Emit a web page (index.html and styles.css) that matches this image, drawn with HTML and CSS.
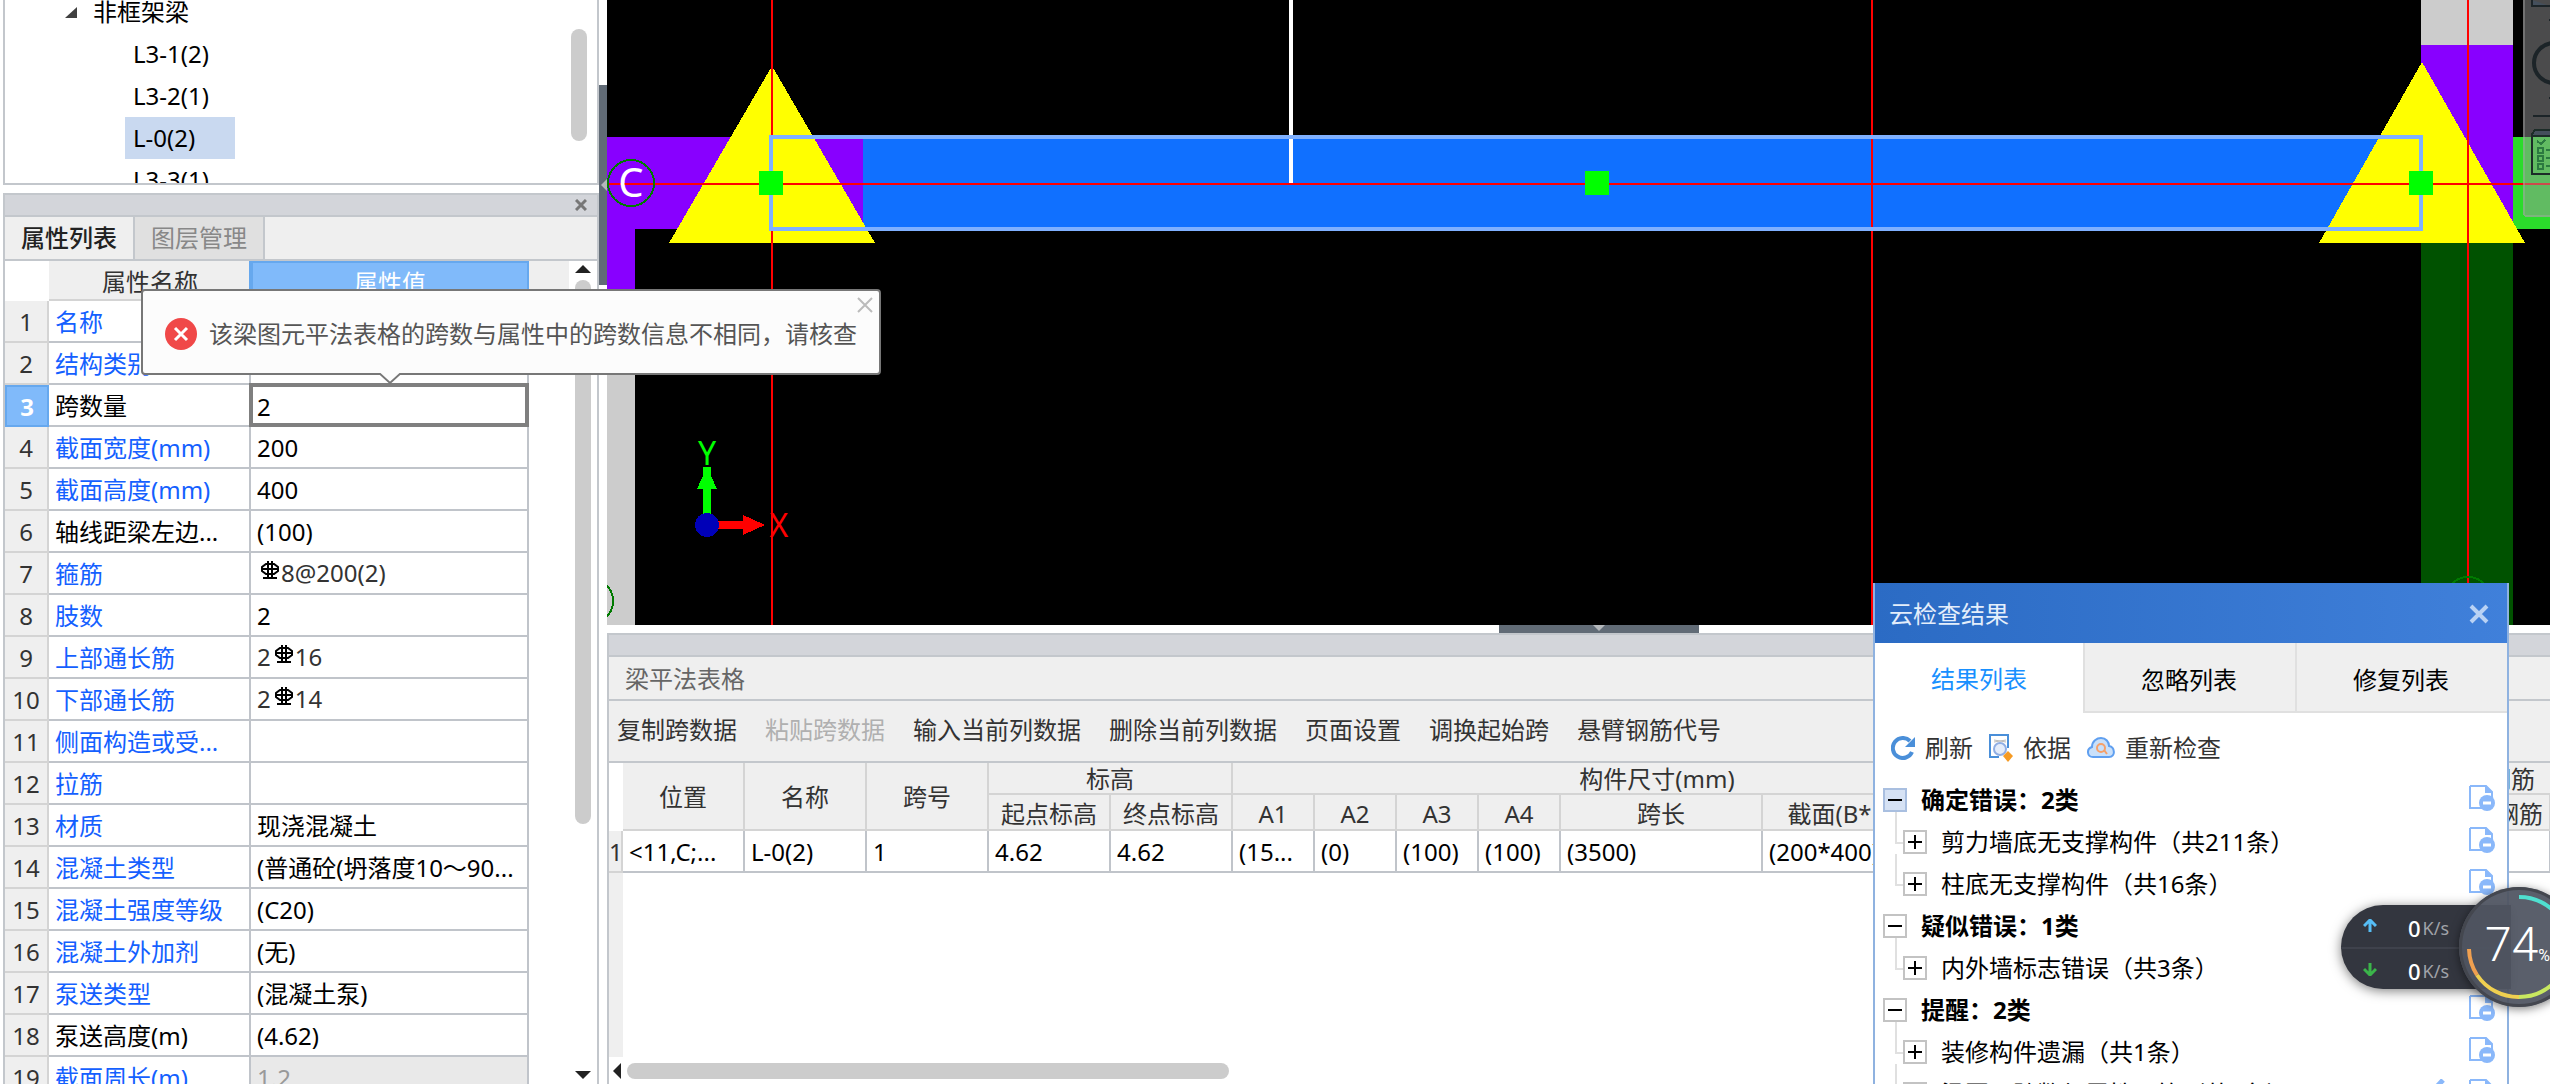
FILE: index.html
```html
<!DOCTYPE html>
<html lang="zh-CN">
<head>
<meta charset="utf-8">
<title>梁平法表格</title>
<link rel="stylesheet" href="styles.css">
</head>
<body>
<svg class="defs" width="0" height="0" aria-hidden="true">
  <defs>
    <symbol id="rebar" viewBox="0 0 18 18">
      <path d="M7 0V14M11 0V14M0 8H18M2 17H16M7 14V17M11 14V17M5 3H13L17 6V10L13 13H5L1 10V6Z" fill="none" stroke="#000" stroke-width="2"/>
    </symbol>
    <symbol id="doc" viewBox="0 0 26 26">
      <path d="M1 1H17L23 7V14M14 23H1V1" fill="none" stroke="#8ab8fa" stroke-width="2"/>
      <path d="M16 0L24 8H16Z" fill="#8ab8fa"/>
      <circle cx="18" cy="18" r="8" fill="#8ab8fa"/>
      <path d="M14 18H22" stroke="#fff" stroke-width="3"/>
    </symbol>
  </defs>
</svg>
<div class="app">
  <aside class="side">
    <section class="components">
      <ul class="comp-tree">
        <li class="comp-root"><svg width="12" height="11"><path d="M12 0V11H0Z" fill="#404040"/></svg><span>非框架梁</span></li>
        <li><span>L3-1(2)</span></li>
        <li><span>L3-2(1)</span></li>
        <li><span class="picked">L-0(2)</span></li>
        <li><span>L3-3(1)</span></li>
      </ul>
      <div class="comp-thumb"></div>
    </section>
    <section class="props">
      <div class="dock-bar"><button class="dock-close" aria-label="关闭"><svg width="12" height="12"><path d="M1 1L11 11M11 1L1 11" stroke="#777" stroke-width="3"/></svg></button></div>
      <div class="side-tabs"><button class="side-tab on">属性列表</button><button class="side-tab">图层管理</button></div>
      <div class="props-body">
        <table class="prop-table">
          <colgroup><col class="c-no"><col class="c-name"><col class="c-value"></colgroup>
          <thead><tr><td class="corner"></td><th>属性名称</th><th class="active">属性值</th></tr></thead>
          <tbody>
            <tr><th>1</th><td class="link">名称</td><td>L-0(2)</td></tr>
            <tr><th>2</th><td class="link">结构类别</td><td></td></tr>
            <tr><th class="active">3</th><td><label for="spans">跨数量</label></td><td class="editing"><input id="spans" value="2"></td></tr>
            <tr><th>4</th><td class="link">截面宽度(mm)</td><td>200</td></tr>
            <tr><th>5</th><td class="link">截面高度(mm)</td><td>400</td></tr>
            <tr><th>6</th><td>轴线距梁左边...</td><td>(100)</td></tr>
            <tr><th>7</th><td class="link">箍筋</td><td class="bar"><svg><use href="#rebar"/></svg>8@200(2)</td></tr>
            <tr><th>8</th><td class="link">肢数</td><td>2</td></tr>
            <tr><th>9</th><td class="link">上部通长筋</td><td class="bar">2<svg><use href="#rebar"/></svg>16</td></tr>
            <tr><th>10</th><td class="link">下部通长筋</td><td class="bar">2<svg><use href="#rebar"/></svg>14</td></tr>
            <tr><th>11</th><td class="link">侧面构造或受...</td><td></td></tr>
            <tr><th>12</th><td class="link">拉筋</td><td></td></tr>
            <tr><th>13</th><td class="link">材质</td><td>现浇混凝土</td></tr>
            <tr><th>14</th><td class="link">混凝土类型</td><td>(普通砼(坍落度10～90...</td></tr>
            <tr><th>15</th><td class="link">混凝土强度等级</td><td>(C20)</td></tr>
            <tr><th>16</th><td class="link">混凝土外加剂</td><td>(无)</td></tr>
            <tr><th>17</th><td class="link">泵送类型</td><td>(混凝土泵)</td></tr>
            <tr><th>18</th><td>泵送高度(m)</td><td>(4.62)</td></tr>
            <tr><th>19</th><td class="link">截面周长(m)</td><td class="off">1.2</td></tr>
          </tbody>
        </table>
        <div class="head-rest"></div>
        <div class="vbar">
          <svg width="16" height="8"><path d="M0 8L8 0L16 8Z" fill="#222"/></svg>
          <div class="vthumb"></div>
          <svg width="16" height="8"><path d="M0 0L8 8L16 0Z" fill="#222"/></svg>
        </div>
      </div>
    </section>
  </aside>
  <div class="vsplit"><div class="vgrip"><svg width="6" height="12"><path d="M6 0V12L0 6Z" fill="#b4b7bb"/></svg></div></div>
  <main class="main">
    <svg class="canvas" shape-rendering="crispEdges">
      <rect width="100%" height="100%" fill="#000"/>
      <rect x="0" y="229" width="28" height="100%" fill="#ccc"/>
      <rect x="0" y="137" width="256" height="92" fill="#8800ff"/>
      <rect x="0" y="229" width="28" height="90" fill="#8800ff"/>
      <rect x="256" y="137" width="1558" height="92" fill="#1070ff"/>
      <rect x="1814" y="0" width="92" height="45" fill="#ccc"/>
      <rect x="1814" y="45" width="92" height="184" fill="#8800ff"/>
      <rect x="1814" y="229" width="92" height="396" fill="#005200"/>
      <rect x="1906" y="137" width="60" height="92" fill="#2bdc2b"/>
      <path d="M684 0V183" stroke="#fff" stroke-width="4"/>
      <path d="M165 66L268 243H62Z M1815 62L1918 243H1712Z" fill="#ff0"/>
      <path d="M0 184H1943M165 0V625M1265 0V625M1861 0V625" stroke="#f00" stroke-width="2"/>
      <rect x="164" y="137" width="1650" height="92" fill="none" stroke="#7fb0ff" stroke-width="4"/>
      <path d="M152 171h24v24h-24zM978 171h24v24h-24zM1802 171h24v24h-24z" fill="#0f0"/>
      <g fill="none" stroke="#007a00" stroke-width="2"><circle cx="24" cy="183" r="23"/><circle cx="-17" cy="601" r="23"/><circle cx="1861" cy="600" r="23"/></g>
      <path d="M100 467V525" stroke="#0f0" stroke-width="8"/>
      <path d="M100 467L110 489H90Z" fill="#0f0"/>
      <path d="M100 525H138" stroke="#f00" stroke-width="8"/>
      <path d="M158 525L136 535V515Z" fill="#f00"/>
      <circle cx="100" cy="525" r="12" fill="#0000b8"/>
      <g text-anchor="middle" class="axis"><text x="24" y="197" font-size="40" fill="#fff">C</text><text x="100" y="465" font-size="32" fill="#0f0">Y</text><text x="172" y="537" font-size="32" fill="#f00">X</text></g>
      <rect x="1916" y="-4" width="80" height="221" rx="4" fill="#99999b" fill-opacity=".49"/>
      <path d="M1917 0V213q0 3 3 3H1943" fill="none" stroke="#aaa" stroke-opacity=".4" stroke-width="2"/>
      <g fill="none" stroke="#1c2428" stroke-width="2" shape-rendering="auto">
        <path d="M1925 0V6H1943" fill="#444f5c"/><path d="M1942 20H1943M1942 98H1943M1926 116H1943"/>
        <circle cx="1947" cy="63" r="20" stroke-width="4"/>
      </g>
      <path d="M1928 130H1943V136H1926Z" fill="#444f5c"/>
      <path d="M1943 130H1928L1925 134V174H1943M1925 136H1943" fill="none" stroke="#1c2c28" stroke-width="2"/>
      <path d="M1930 141L1934 144L1938 140M1931 148h5v5h-5zM1931 156h5v5h-5zM1931 164h5v5h-5zM1939 150H1943M1939 158H1943M1939 166H1943" fill="none" stroke="#2b7a40" stroke-width="2"/>
    </svg>
    <div class="hsplit"><div class="hgrip"><svg width="12" height="6"><path d="M0 0H12L6 6Z" fill="#b4b7bb"/></svg></div></div>
    <section class="beam">
      <div class="dock-bar"></div>
      <h2 class="beam-title">梁平法表格</h2>
      <div class="beam-tools">
        <button>复制跨数据</button><button disabled>粘贴跨数据</button><button>输入当前列数据</button><button>删除当前列数据</button><button>页面设置</button><button>调换起始跨</button><button>悬臂钢筋代号</button>
      </div>
      <div class="grid-wrap">
        <table class="beam-table">
          <colgroup><col class="w-no"><col class="w-m"><col class="w-m"><col class="w-m"><col class="w-m"><col class="w-m"><col class="w-s"><col class="w-s"><col class="w-s"><col class="w-s"><col class="w-l"><col class="w-x"><col class="w-x"><col class="w-m"><col class="w-y"><col class="w-z"><col class="w-v"></colgroup>
          <thead>
            <tr><td class="corner" rowspan="2"></td><th rowspan="2">位置</th><th rowspan="2">名称</th><th rowspan="2">跨号</th><th colspan="2">标高</th><th colspan="7">构件尺寸(mm)</th><th rowspan="2">上通长筋</th><th colspan="3">上部钢筋</th></tr>
            <tr><th>起点标高</th><th>终点标高</th><th>A1</th><th>A2</th><th>A3</th><th>A4</th><th>跨长</th><th>截面(B*H)</th><th>距左边线</th><th>左支座钢筋</th><th>跨中钢筋</th><th>右支座钢筋</th></tr>
          </thead>
          <tbody><tr><th>1</th><td>&lt;11,C;...</td><td>L-0(2)</td><td>1</td><td>4.62</td><td>4.62</td><td>(15...</td><td>(0)</td><td>(100)</td><td>(100)</td><td>(3500)</td><td>(200*400)</td><td></td><td></td><td></td><td></td><td></td></tr></tbody>
        </table>
        <div class="gutter"></div>
      </div>
      <div class="hbar"><svg width="8" height="16"><path d="M8 0V16L0 8Z" fill="#222"/></svg><div class="hthumb"></div></div>
    </section>
  </main>

  <div class="tip" role="alert">
    <svg width="32" height="32"><circle cx="16" cy="16" r="16" fill="#f04848"/><path d="M10 10L22 22M22 10L10 22" stroke="#fff" stroke-width="3"/></svg>
    <span>该梁图元平法表格的跨数与属性中的跨数信息不相同，请核查</span>
    <button class="tip-close" aria-label="关闭"><svg width="16" height="16"><path d="M1 1L15 15M15 1L1 15" stroke="#bbb" stroke-width="2"/></svg></button>
    <svg class="tip-tail" width="22" height="12"><path d="M0 0L11 10L22 0" fill="#fcfcfc" stroke="#777" stroke-width="2"/></svg>
  </div>

  <section class="cloud">
    <header class="cloud-head"><span>云检查结果</span><button aria-label="关闭"><svg width="20" height="20"><path d="M2 2L18 18M18 2L2 18" stroke="#b9d2f4" stroke-width="4"/></svg></button></header>
    <nav class="cloud-tabs"><button class="on">结果列表</button><button>忽略列表</button><button>修复列表</button></nav>
    <div class="cloud-tools">
      <button><svg width="24" height="24"><path d="M19 5A10 10 0 1 0 21 16" fill="none" stroke="#4a8fd9" stroke-width="4"/><path d="M24 1V11H14Z" fill="#4a8fd9"/></svg>刷新</button>
      <button><svg width="24" height="28"><path d="M19 14V1H1V23H10" fill="none" stroke="#4a8fd9" stroke-width="2"/><path d="M5 6L17 8M17 6L5 8" stroke="#bbb"/><circle cx="11" cy="15" r="6" fill="#e4ecfa" stroke="#90aee4" stroke-width="2"/><path d="M19 17L24 22L19 28L14 22Z" fill="#f59a23"/></svg>依据</button>
      <button><svg width="28" height="22"><path d="M6 20C0 20-1 12 5 10C5 4 10 1 14 1C19 1 22 5 22 9C28 10 29 20 22 20Z" fill="#c9e0fa" stroke="#5f9ff0" stroke-width="2"/><circle cx="14" cy="11" r="4" fill="none" stroke="#f5a06a" stroke-width="2"/><path d="M17 13L20 17" stroke="#f5a06a" stroke-width="2"/></svg>重新检查</button>
    </div>
    <ul class="checks">
      <li class="group"><button class="box hot" aria-label="收起"></button><span>确定错误：2类</span><svg><use href="#doc"/></svg></li>
      <li class="item"><button class="box plus" aria-label="展开"></button><span>剪力墙底无支撑构件（共211条）</span><svg><use href="#doc"/></svg></li>
      <li class="item"><button class="box plus" aria-label="展开"></button><span>柱底无支撑构件（共16条）</span><svg><use href="#doc"/></svg></li>
      <li class="group"><button class="box" aria-label="收起"></button><span>疑似错误：1类</span><svg><use href="#doc"/></svg></li>
      <li class="item"><button class="box plus" aria-label="展开"></button><span>内外墙标志错误（共3条）</span><svg><use href="#doc"/></svg></li>
      <li class="group"><button class="box" aria-label="收起"></button><span>提醒：2类</span><svg><use href="#doc"/></svg></li>
      <li class="item"><button class="box plus" aria-label="展开"></button><span>装修构件遗漏（共1条）</span><svg><use href="#doc"/></svg></li>
      <li class="item"><button class="box plus" aria-label="展开"></button><span>梁图元跨数与属性不符（共2条）</span><svg viewBox="0 0 26 26"><path d="M2 14L14 1" stroke="#8ab8fa" stroke-width="5"/></svg><svg><use href="#doc"/></svg></li>
    </ul>
  </section>

  <div class="meter">
    <div class="speeds">
      <div><svg width="14" height="14"><path d="M7 13V2M1 7L7 1L13 7" fill="none" stroke="#56bdf5" stroke-width="3"/></svg><b>0</b><i>K/s</i></div>
      <div><svg width="14" height="14"><path d="M7 1V12M1 7L7 13L13 7" fill="none" stroke="#3bb54a" stroke-width="3"/></svg><b>0</b><i>K/s</i></div>
    </div>
    <div class="dial">
      <svg width="120" height="120" viewBox="0 0 120 120"><path d="M60 10A50 50 0 0 1 110 60" fill="none" stroke="#4fe0d0" stroke-width="4"/><path d="M10 62A50 50 0 0 0 18 88" fill="none" stroke="#f0a050" stroke-width="4"/><path d="M18 88A50 50 0 0 0 60 110" fill="none" stroke="#f0d050" stroke-width="4"/><path d="M60 110A50 50 0 0 0 110 60" fill="none" stroke="#c8e860" stroke-width="4"/></svg>
      <span class="pct">74<small>%</small></span>
    </div>
  </div>
</div>
</body>
</html>
```
FILE: styles.css
```css
* { box-sizing: border-box; }
body {
  margin: 0;
  font: 24px/32px "Noto Sans", "Noto Sans CJK SC", sans-serif;
  color: #000;
  background: #fff;
}
button {
  font: inherit;
  color: inherit;
  background: none;
  border: 0;
  padding: 0;
  margin: 0;
}
ul { list-style: none; margin: 0; padding: 0; }
svg { display: block; flex: none; }
.defs { position: absolute; }
.app {
  position: relative;
  display: flex;
  height: 100vh;
  overflow: hidden;
}

/* left column */
.side { flex: none; width: 599px; padding-left: 3px; display: flex; flex-direction: column; }
.components {
  flex: none;
  height: 185px;
  overflow: hidden;
  display: flex;
  justify-content: space-between;
  border: solid #c3c7cc;
  border-width: 0 2px 2px;
}
.comp-tree { margin-top: -9px; }
.comp-tree li { height: 42px; padding-left: 120px; display: flex; align-items: center; }
.comp-tree span { width: 110px; padding-left: 8px; line-height: 42px; white-space: nowrap; }
.comp-tree .picked { background: #c9d9f0; }
.comp-tree .comp-root { padding-left: 60px; gap: 8px; }
.comp-thumb { width: 16px; height: 112px; margin: 29px 10px 0 0; border-radius: 8px; background: #ccc; }

.props {
  flex: 1;
  min-height: 0;
  margin-top: 8px;
  display: flex;
  flex-direction: column;
  border: solid #c3c7cc;
  border-width: 2px 2px 0;
  overflow: hidden;
}
.dock-bar {
  flex: none;
  height: 22px;
  display: flex;
  justify-content: flex-end;
  align-items: center;
  padding-right: 10px;
  background: #d3d5da;
  border-bottom: 2px solid #c3c7cc;
}
.side-tabs { flex: none; height: 44px; display: flex; background: #efefef; border-bottom: 2px solid #c3c7cc; }
.side-tab { width: 130px; color: #888; background: #e0e0e0; border-right: 2px solid #c3c7cc; }
.side-tab.on { background: #efefef; color: #222; font-weight: 500; }
.props-body { flex: 1; min-height: 0; display: flex; align-items: stretch; }

table { border-collapse: separate; border-spacing: 0; table-layout: fixed; }
th { font-weight: 400; padding: 2px 0 0; color: #333; }
td { padding: 2px 0 0; white-space: nowrap; }
.prop-table { width: 524px; height: max-content; flex: none; }
.c-no { width: 44px; }
.c-name { width: 202px; }
.c-value { width: 278px; }
.prop-table thead th { height: 40px; padding-top: 4px; background: #efefef; border-bottom: 2px solid #d4d4d4; }
.prop-table thead th.active { background: #80bafa; border: 2px solid #66a8ee; color: #fff; box-shadow: -2px 0 #66a8ee; }
.prop-table tbody th { height: 42px; background: #efefef; border: solid #d4d4d4; border-width: 0 2px 2px 0; }
.prop-table tbody th.active { background: #80bafa; border: 2px solid #66a8ee; color: #fff; font-weight: 700; }
.prop-table tbody td { height: 42px; padding-left: 6px; border: solid #c0c4ca; border-width: 0 2px 2px 0; overflow: hidden; }
.prop-table .link { color: #1460ff; }
.prop-table .off { background: #e9e9e9; color: #999; }
.prop-table .bar { color: #333; padding-bottom: 3px; }
.bar svg { display: inline-block; width: 18px; height: 18px; margin: 0 2px 0 4px; vertical-align: 3px; }
.prop-table tbody td.editing { padding: 0; overflow: visible; }
.editing input {
  display: block;
  width: 100%;
  height: 40px;
  padding: 2px 6px 0;
  border: 0;
  font: inherit;
  outline: 4px solid #7f7f7f;
  outline-offset: -2px;
}
.head-rest { width: 40px; height: 40px; background: #efefef; }
.vbar { flex: 1; display: flex; flex-direction: column; align-items: center; padding: 4px 0 5px; }
.vthumb { width: 16px; height: 544px; margin: 7px 0 auto; border-radius: 8px; background: #ccc; }

.vsplit { flex: none; width: 8px; padding-top: 85px; }
.vgrip { height: 200px; display: flex; align-items: center; justify-content: flex-end; background: #616b76; }

/* drawing area and table below it */
.main { flex: 1; min-width: 0; display: flex; flex-direction: column; }
.canvas { flex: 1 1 0; width: 100%; min-height: 0; overflow: hidden; }
.axis { font-family: "Noto Sans", sans-serif; }
.hsplit { flex: none; height: 8px; display: flex; padding-left: 892px; }
.hgrip { width: 200px; display: flex; justify-content: center; background: #616b76; }
.beam {
  flex: none;
  height: 451px;
  display: flex;
  flex-direction: column;
  border: solid #c3c7cc;
  border-width: 2px 0 0 2px;
}
.beam-title {
  margin: 0;
  flex: none;
  height: 44px;
  padding-left: 16px;
  font: inherit;
  line-height: 44px;
  color: #666;
  background: #efefef;
  border-bottom: 2px solid #c3c7cc;
}
.beam-tools {
  flex: none;
  height: 62px;
  display: flex;
  align-items: center;
  gap: 28px;
  padding: 0 8px 2px;
  color: #333;
  background: #efefef;
  border-bottom: 2px solid #c3c7cc;
}
.beam-tools button { white-space: nowrap; }
.beam-tools button:disabled { color: #b0b0b0; }
.grid-wrap { flex: 1; min-height: 0; overflow: hidden; display: flex; flex-direction: column; }
.beam-table { flex: none; width: 2162px; }
.w-no { width: 14px; }
.w-m { width: 122px; }
.w-s { width: 82px; }
.w-l { width: 202px; }
.w-x { width: 160px; }
.w-y { width: 236px; }
.w-z { width: 110px; }
.w-v { width: 220px; }
.beam-table thead th { height: 36px; padding-top: 4px; line-height: 28px; background: #efefef; border: solid #d4d4d4; border-width: 0 2px 2px 0; white-space: nowrap; }
.beam-table thead tr:first-child th { height: 32px; padding-top: 2px; }
.beam-table tbody th { height: 42px; background: #efefef; border: solid #d4d4d4; border-width: 0 2px 2px 0; }
.beam-table tbody td { height: 42px; padding-left: 6px; border: solid #c0c4ca; border-width: 0 2px 2px 0; overflow: hidden; }
.gutter { flex: 1; width: 14px; background: #efefef; }
.hbar { flex: none; height: 27px; display: flex; align-items: center; gap: 6px; padding-left: 4px; }
.hthumb { width: 602px; height: 16px; border-radius: 8px; background: #ccc; }

/* warning bubble over the property list */
.tip {
  position: absolute;
  left: 141px;
  top: 289px;
  height: 86px;
  display: flex;
  align-items: center;
  gap: 12px;
  padding: 4px 22px 0 22px;
  color: #555;
  background: #fcfcfc;
  border: 2px solid #777;
  border-radius: 4px;
  white-space: nowrap;
}
.tip-close { position: absolute; top: 6px; right: 6px; }
.tip-tail { position: absolute; left: 236px; top: 82px; }

/* cloud check window */
.cloud {
  position: absolute;
  right: 41px;
  top: 583px;
  bottom: 0;
  width: 636px;
  overflow: hidden;
  background: #fff;
  border: solid #8fb2e0;
  border-width: 0 2px;
}
.cloud-head {
  height: 60px;
  margin: 0 -2px;
  padding: 2px 20px 0 16px;
  display: flex;
  align-items: center;
  justify-content: space-between;
  color: #e4eefb;
  background: linear-gradient(90deg, #2b6bc4, #4080da);
}
.cloud-tabs { display: grid; grid-template-columns: 208px 1fr 1fr; height: 70px; }
.cloud-tabs button { background: #efefef; border: solid #e0e0e0; border-width: 0 0 2px 2px; padding: 6px 2px 0 0; }
.cloud-tabs .on { background: #fff; border: 0; color: #1890ff; padding: 2px 0 0; }
.cloud-tools { display: flex; align-items: center; gap: 16px; height: 66px; padding: 4px 16px 0; color: #333; }
.cloud-tools button { display: flex; align-items: center; gap: 10px; }
.cloud-tools button + button { gap: 10px; }
.checks li {
  position: relative;
  height: 42px;
  padding: 0 12px 0 8px;
  display: flex;
  align-items: center;
}
.checks span { flex: 1; white-space: nowrap; }
.checks svg { width: 26px; height: 26px; margin-bottom: 4px; }
.group { gap: 14px; font-weight: 700; }
.checks .item { padding-left: 28px; gap: 14px; }
.item::before { content: ""; position: absolute; left: 20px; top: -9px; width: 8px; height: 30px; border: solid #e0e0e0; border-width: 0 0 2px 2px; }
.box {
  position: relative;
  width: 24px;
  height: 24px;
  border: 2px solid #c3c3c3;
  background: #fff;
}
.box.hot { background: #d6e2f4; border-color: #a9bfe0; }
.box::before, .plus::after { content: ""; position: absolute; background: #000; left: 3px; top: 9px; width: 14px; height: 2px; }
.plus::after { left: 9px; top: 3px; width: 2px; height: 14px; }

/* network speed widget */
.meter { position: absolute; right: -29px; top: 887px; height: 120px; display: flex; align-items: center; }
.speeds {
  width: 170px;
  height: 84px;
  margin-right: -52px;
  border-radius: 42px 0 0 42px;
  background: #33363f;
  box-shadow: 0 2px 12px rgba(0, 0, 0, .5);
  color: #fff;
}
.speeds div { height: 42px; display: flex; align-items: center; padding: 4px 0 0 22px; }
.speeds div + div { border-top: 2px solid #3f424c; }
.speeds svg { margin-bottom: 4px; }
.speeds b { margin-left: 31px; font-size: 22px; font-weight: 500; }
.speeds i { margin-left: 2px; font-size: 18px; font-style: normal; color: #a0a2a8; }
.dial {
  position: relative;
  width: 120px;
  height: 120px;
  border-radius: 50%;
  background: rgba(80, 85, 98, .94);
  box-shadow: 0 2px 10px rgba(0, 0, 0, .5), inset 0 0 0 3px #44474f;
}
.pct { position: absolute; left: 26px; top: 28px; font: 300 48px/60px Roboto, sans-serif; color: #fff; white-space: nowrap; }
.pct small { font-size: 16px; font-weight: 400; }
```
